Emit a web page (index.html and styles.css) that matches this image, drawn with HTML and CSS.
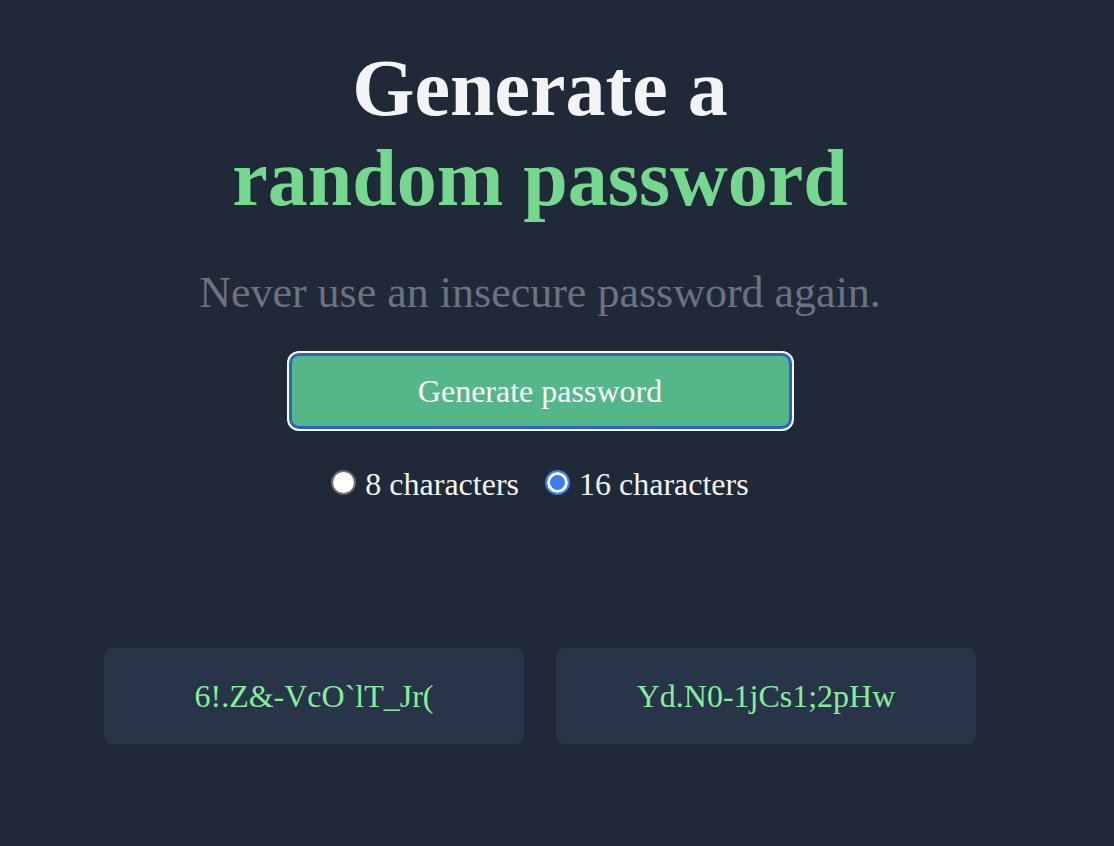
FILE: index.html
```html
<!DOCTYPE html>
<html lang="en">
<head>
<meta charset="utf-8">
<title>Generate a random password</title>
<link rel="stylesheet" href="styles.css">
</head>
<body>
<main class="page">
  <h1 class="title">Generate a<br><span class="accent">random password</span></h1>
  <p class="subtitle">Never use an insecure password again.</p>
  <button class="generate" type="button">Generate password</button>
  <div class="options">
    <label class="option"><input type="radio" name="len" class="radio"> 8 characters</label>
    <label class="option"><input type="radio" name="len" class="radio" checked> 16 characters</label>
  </div>
  <section class="results">
    <div class="card">6!.Z&amp;-VcO`lT_Jr(</div>
    <div class="card">Yd.N0-1jCs1;2pHw</div>
  </section>
</main>
</body>
</html>
```

FILE: styles.css
```css
html, body {
  margin: 0;
  padding: 0;
  background: #1f2937;
  height: 100%;
}
body {
  font-family: "Liberation Serif", "Times New Roman", serif;
  color: #ffffff;
}
.page {
  width: 1080px;
  display: flex;
  flex-direction: column;
  align-items: center;
  padding-top: 43px;
}
.title {
  margin: 0;
  font-size: 80px;
  line-height: 90px;
  font-weight: 700;
  text-align: center;
  color: #f3f4f6;
}
.accent {
  color: #74d88f;
}
.subtitle {
  margin: 44px 0 0;
  font-size: 44px;
  line-height: 51px;
  color: #6b7280;
}
.generate {
  margin-top: 35px;
  width: 503px;
  height: 76px;
  border: 3px solid #2d62cc;
  border-radius: 10px;
  box-shadow: 0 0 0 2px #ffffff;
  background: #53b787;
  color: #ffffff;
  font-family: "Liberation Serif", "Times New Roman", serif;
  font-size: 32px;
  padding: 0;
}
.options {
  margin-top: 37px;
  display: flex;
  gap: 26px;
  font-size: 32px;
  line-height: 37px;
  color: #f3f4f6;
}
.option {
  display: flex;
  align-items: center;
}
.radio {
  appearance: none;
  -webkit-appearance: none;
  width: 25px;
  height: 25px;
  margin: 0 9px 0 0;
  border-radius: 50%;
  background: #ffffff;
  border: 2px solid #6b6b6b;
  position: relative;
  top: -2px;
}
.radio:checked {
  border: 2px solid #3b7cf5;
  background: #3b7cf5;
  box-shadow: inset 0 0 0 3px #ffffff;
}
.results {
  margin-top: 145px;
  display: flex;
  gap: 32px;
}
.card {
  width: 420px;
  height: 96px;
  border-radius: 8px;
  background: #283548;
  color: #86ee9a;
  font-size: 32px;
  display: flex;
  align-items: center;
  justify-content: center;
}
```
